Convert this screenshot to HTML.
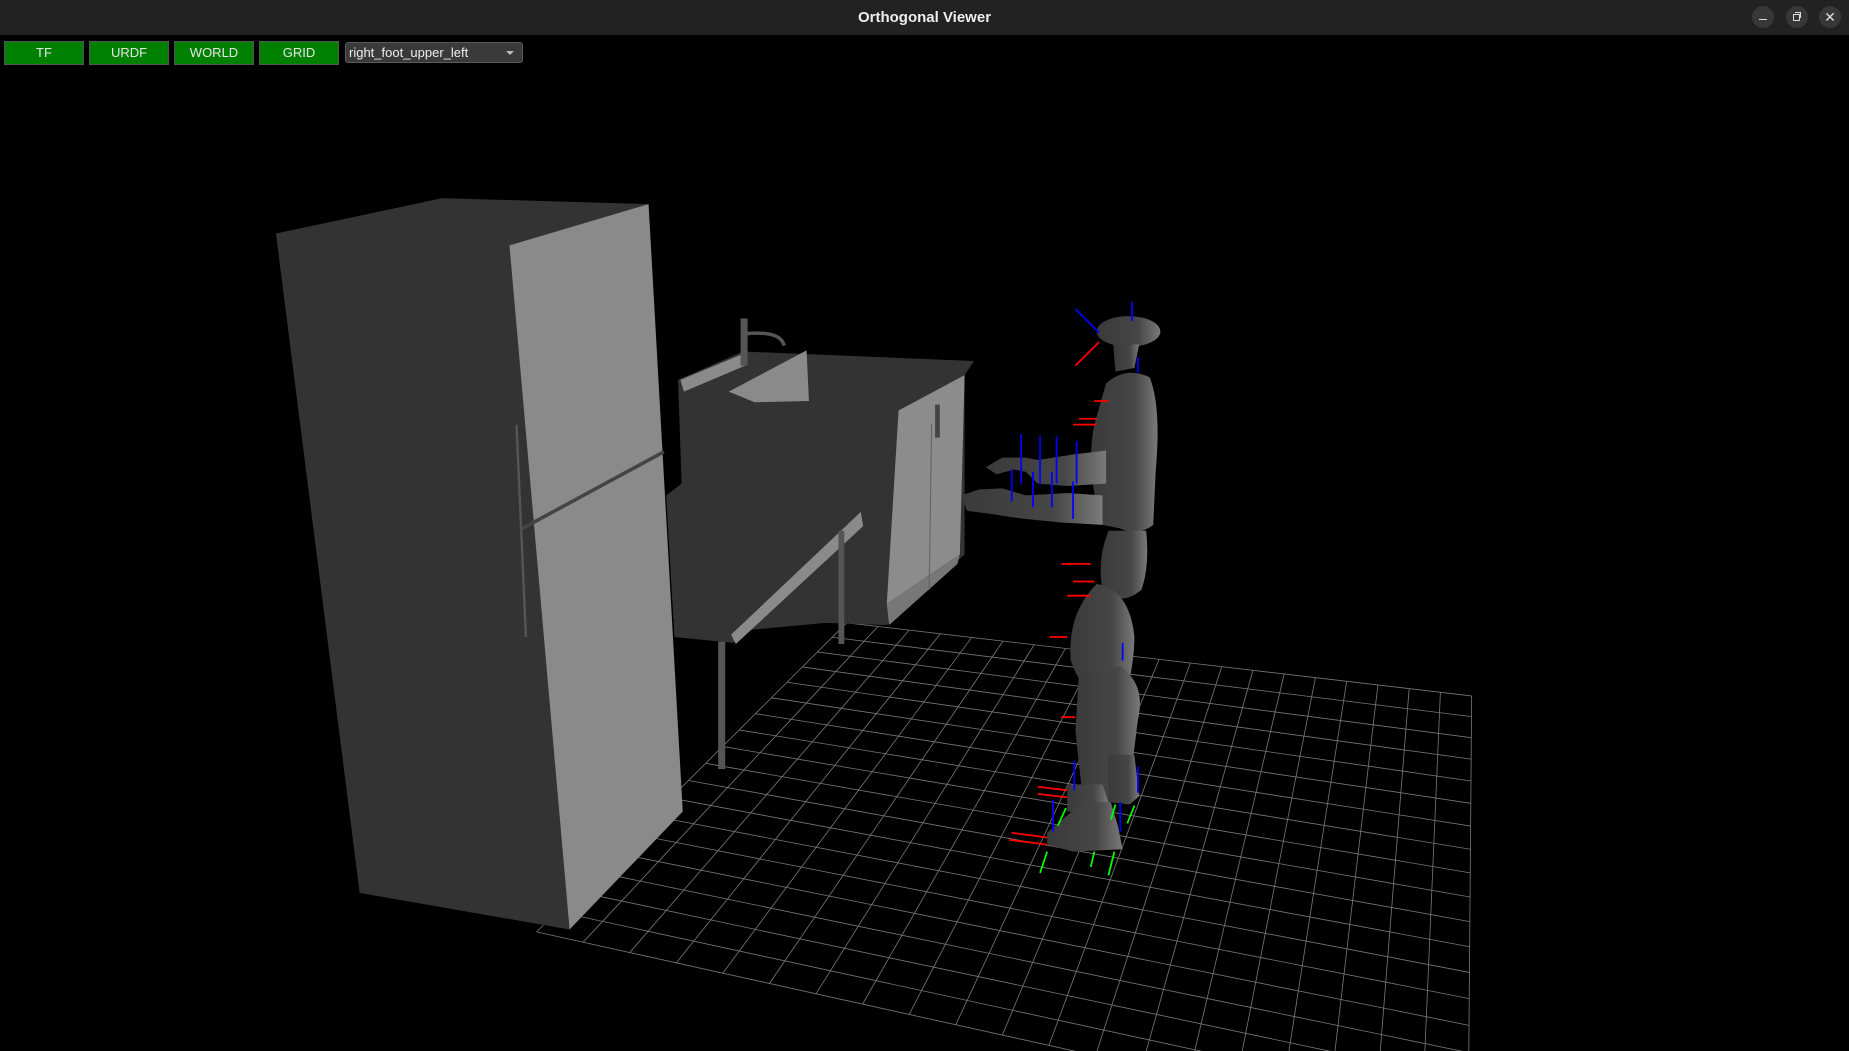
<!DOCTYPE html>
<html><head><meta charset="utf-8"><style>
html,body{margin:0;padding:0;background:#000;width:1849px;height:1051px;overflow:hidden;font-family:"Liberation Sans",sans-serif}
#scene{position:absolute;left:0;top:0;overflow:hidden;display:block}
#title{position:absolute;left:0;top:0;width:1849px;height:35px;background:#222;color:#eee;font-weight:bold;font-size:15px;text-align:center;line-height:35px}
.wb{position:absolute;top:6px;width:22px;height:22px;border-radius:50%;background:#373737}
.btn{position:absolute;top:41px;width:78px;height:22px;background:#008000;border:1px solid #555;color:#e6e6e6;font-size:13px;text-align:center;line-height:22px}
#dd{position:absolute;left:345px;top:42px;width:178px;height:21px;background:#3a3a3a;border:1px solid #5a5a5a;border-radius:3px;color:#eee;font-size:13px;line-height:19px;padding-left:3px;box-sizing:border-box}
#dd:after{content:"";position:absolute;right:8px;top:8px;border-left:4px solid transparent;border-right:4px solid transparent;border-top:4px solid #bbb}
</style></head><body>
<svg id="scene" width="1849" height="1051" viewBox="0 0 1568 891" preserveAspectRatio="none">
<defs>
<clipPath id="cp"><rect x="0" y="0" width="1568" height="891"/></clipPath>
<linearGradient id="rb" x1="0" x2="1"><stop offset="0" stop-color="#3a3a3a"/><stop offset="0.65" stop-color="#464646"/><stop offset="1" stop-color="#7a7a7a"/></linearGradient>
</defs>
<g clip-path="url(#cp)">
<g id="grid" stroke="#777" stroke-width="0.7" fill="none"></g>
<polygon points="575,322 630,298 826,306 818,318 818,470 752,530 700,528 572,540 565,420 578,410" fill="#333"/>
<polygon points="762,348 818,318 814,470 752,512" fill="#8c8c8c"/>
<polygon points="752,512 814,470 812,478 754,530" fill="#777"/>
<polygon points="577,322 630,300 632,310 580,332" fill="#8a8a8a"/>
<polygon points="618,332 684,297 686,340 640,341" fill="#8a8a8a"/>
<rect x="628" y="270" width="6" height="40" fill="#555"/>
<path d="M632 283 Q662 280 665 293" stroke="#555" stroke-width="3" fill="none"/>
<rect x="793" y="343" width="4" height="28" fill="#444"/>
<line x1="790" y1="360" x2="788" y2="500" stroke="#666" stroke-width="1"/>
<polygon points="565,420 732,437 732,446 622,545 572,540" fill="#333"/>
<polygon points="620,538 730,434 732,446 624,546" fill="#8a8a8a"/>
<rect x="609" y="544" width="6" height="108" fill="#555"/>
<rect x="711" y="450" width="5" height="96" fill="#555"/>
<polygon points="234,198 375,168 550,173 432,208 483,788 305,757" fill="#333"/>
<polygon points="432,208 550,173 579,688 483,788" fill="#8a8a8a"/>
<line x1="443" y1="448" x2="563" y2="383" stroke="#444" stroke-width="3"/>
<line x1="438" y1="360" x2="446" y2="540" stroke="#555" stroke-width="2"/>
<g fill="url(#rb)">
<ellipse cx="957" cy="281" rx="27" ry="13"/>
<path d="M944 292 L966 292 L962 312 L946 315 Z"/>
<path d="M938 325 Q955 310 975 320 Q985 345 980 400 L978 445 Q965 455 950 448 L935 445 Q920 400 928 360 Z"/>
<path d="M940 450 L972 450 Q975 480 968 500 Q950 515 935 500 Q930 475 940 450Z"/>
<path d="M930 495 Q958 500 962 540 Q962 560 955 590 L945 600 Q918 590 908 560 Q905 520 930 495Z"/>
<path d="M915 570 L950 565 Q972 580 965 610 L960 650 L940 680 L918 675 L912 620 Z"/>
<path d="M940 640 L962 640 L966 675 L958 682 L940 680Z"/>
<path d="M905 665 L935 665 L940 680 L935 690 L905 688Z"/>
<path d="M918 680 L942 680 L948 700 L952 720 L910 722 L888 716 L888 706 Z"/>
<path d="M912 385 L938 382 L938 410 L905 412 L880 410 L870 400 L860 398 L845 402 L836 396 L850 388 L870 388 L880 390 Z"/>
<path d="M905 418 L935 420 L935 445 L900 443 L870 440 L855 438 L842 436 L820 433 L815 420 L830 415 L850 414 L870 420 Z"/>
</g>
<g stroke-width="1.5">
<line x1="912" y1="262" x2="932" y2="282" stroke="#00f"/>
<line x1="912" y1="310" x2="932" y2="290" stroke="#f00"/>
<line x1="960" y1="256" x2="960" y2="272" stroke="#00f"/>
<g stroke="#00f"><line x1="866" y1="368" x2="866" y2="410"/><line x1="882" y1="370" x2="882" y2="410"/><line x1="896" y1="370" x2="896" y2="410"/><line x1="913" y1="374" x2="913" y2="410"/><line x1="858" y1="398" x2="858" y2="425"/><line x1="876" y1="400" x2="876" y2="430"/><line x1="892" y1="400" x2="892" y2="430"/><line x1="910" y1="408" x2="910" y2="440"/><line x1="965" y1="303" x2="965" y2="316"/>
<line x1="893" y1="678" x2="893" y2="705"/><line x1="911" y1="645" x2="911" y2="670"/><line x1="950" y1="680" x2="950" y2="705"/><line x1="965" y1="650" x2="965" y2="672"/><line x1="952" y1="545" x2="952" y2="560"/></g>
<g stroke="#f00"><line x1="910" y1="360" x2="930" y2="360"/><line x1="915" y1="355" x2="930" y2="355"/><line x1="928" y1="340" x2="940" y2="340"/><line x1="900" y1="478" x2="925" y2="478"/><line x1="910" y1="493" x2="928" y2="493"/><line x1="905" y1="505" x2="925" y2="505"/><line x1="890" y1="540" x2="905" y2="540"/><line x1="880" y1="667" x2="905" y2="670"/><line x1="880" y1="673" x2="905" y2="676"/><line x1="858" y1="706" x2="888" y2="710"/><line x1="856" y1="712" x2="888" y2="716"/><line x1="900" y1="608" x2="912" y2="608"/></g>
<g stroke="#0f0"><line x1="882" y1="740" x2="888" y2="722"/><line x1="925" y1="735" x2="928" y2="722"/><line x1="940" y1="742" x2="945" y2="722"/><line x1="897" y1="700" x2="904" y2="685"/><line x1="942" y1="695" x2="946" y2="682"/><line x1="956" y1="698" x2="962" y2="683"/></g>
</g>
</g>
</svg>
<div id="title">Orthogonal Viewer</div>
<div class="wb" style="left:1752px"><div style="position:absolute;left:7px;top:13px;width:8px;height:1px;background:#ddd"></div></div>
<div class="wb" style="left:1786px"><div style="position:absolute;left:7px;top:8px;width:5px;height:5px;border:1px solid #ddd"></div><div style="position:absolute;left:9px;top:6px;width:5px;height:5px;border-top:1px solid #ddd;border-right:1px solid #ddd"></div></div>
<div class="wb" style="left:1819px;color:#ddd;font-size:14px;text-align:center;line-height:22px">✕</div>
<div class="btn" style="left:4px">TF</div>
<div class="btn" style="left:89px">URDF</div>
<div class="btn" style="left:174px">WORLD</div>
<div class="btn" style="left:259px">GRID</div>
<div id="dd">right_foot_upper_left</div>
<script>
(function(){
var g=document.getElementById('grid');
var A=[718,528],B=[1248,590],C=[1245,965],D=[455,790];
function P(u,v){var x1=A[0]+(B[0]-A[0])*u,y1=A[1]+(B[1]-A[1])*u,x2=D[0]+(C[0]-D[0])*u,y2=D[1]+(C[1]-D[1])*u;return [x1+(x2-x1)*v,y1+(y2-y1)*v];}
function T(v){var r=1.2;return v/(v+r*(1-v));}
var N=20,M=18,s='';
for(var i=0;i<=N;i++){var u=i/N,p=P(u,0),q=P(u,1);s+='<line x1="'+p[0]+'" y1="'+p[1]+'" x2="'+q[0]+'" y2="'+q[1]+'"/>';}
for(var j=0;j<=M;j++){var v=T(j/M),p=P(0,v),q=P(1,v);s+='<line x1="'+p[0]+'" y1="'+p[1]+'" x2="'+q[0]+'" y2="'+q[1]+'"/>';}
g.innerHTML=s;
})();
</script>
</body></html>
